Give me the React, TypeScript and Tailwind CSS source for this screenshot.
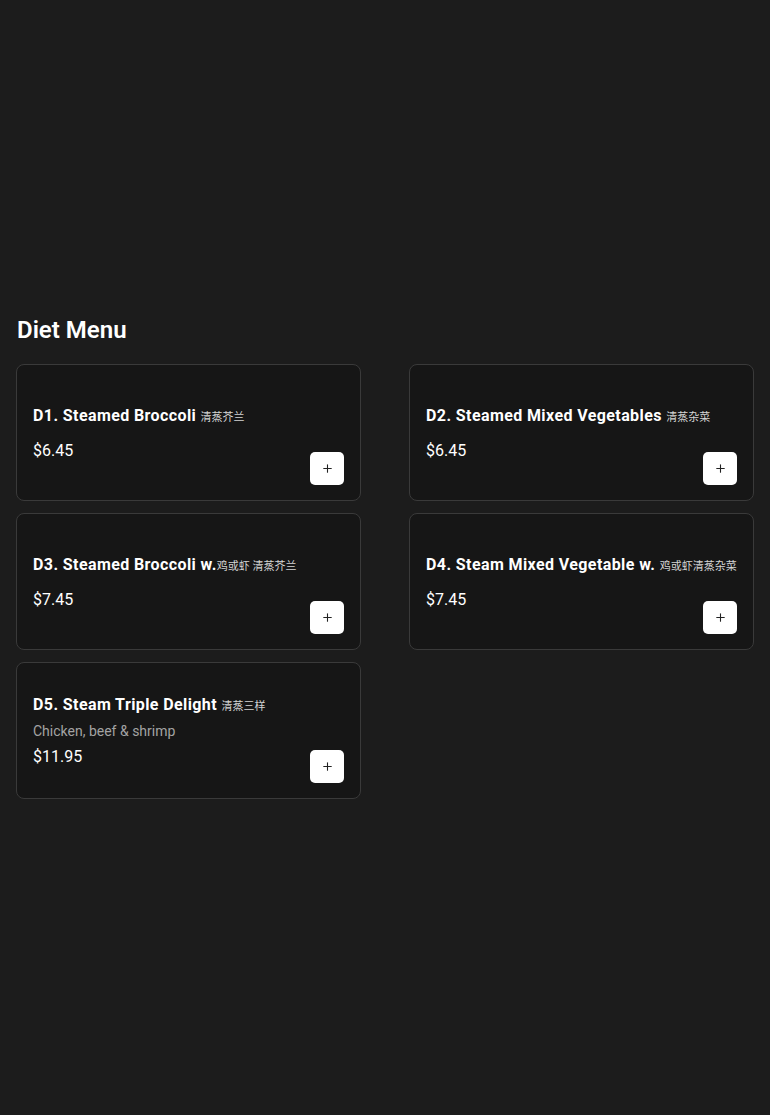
import React from 'react';
import { Plus } from 'lucide-react';

interface MenuItem {
  code: string;
  name: string;
  chinese: string;
  description?: string;
  price: string;
}

const items: MenuItem[] = [
  { code: 'D1', name: 'Steamed Broccoli', chinese: '清蒸芥兰', price: '$6.45' },
  { code: 'D2', name: 'Steamed Mixed Vegetables', chinese: '清蒸杂菜', price: '$6.45' },
  { code: 'D3', name: 'Steamed Broccoli w.', chinese: '鸡或虾 清蒸芥兰', price: '$7.45' },
  { code: 'D4', name: 'Steam Mixed Vegetable w.', chinese: '鸡或虾清蒸杂菜', price: '$7.45' },
  {
    code: 'D5',
    name: 'Steam Triple Delight',
    chinese: '清蒸三样',
    description: 'Chicken, beef & shrimp',
    price: '$11.95',
  },
];

const MenuCard: React.FC<{ item: MenuItem }> = ({ item }) => {
  // D3 has no space between "w." and the chinese name
  const sep = item.code === 'D3' ? '' : ' ';

  return (
    <div className="flex h-[137px] justify-between rounded-lg border border-[#3a3a3a] bg-[#161616] px-4 pb-[15px]">
      <div className="flex min-w-0 flex-col justify-center pt-4">
        <h3 className="whitespace-nowrap text-[16px] font-bold leading-[24px] tracking-wide text-white">
          {item.code}. {item.name}
          {sep}
          <span className="text-[11px] font-normal tracking-normal text-[#d4d4d4]">{item.chinese}</span>
        </h3>
        {item.description && (
          <p className="mt-[2px] text-[14px] leading-[20px] text-[#a3a3a3]">{item.description}</p>
        )}
        <p className={`text-[16px] leading-[24px] text-white ${item.description ? 'mt-1' : 'mt-[9px]'}`}>
          {item.price}
        </p>
      </div>
      <button
        className="flex h-[33px] w-[34px] shrink-0 items-center justify-center self-end rounded-[5px] bg-white"
        aria-label="Add"
      >
        <Plus className="h-[13px] w-[13px] text-[#222]" strokeWidth={2} />
      </button>
    </div>
  );
};

export default function App() {
  return (
    <div
      className="min-h-[1115px] bg-[#1c1c1c] px-4"
      style={{ fontFamily: 'Roboto, "Noto Sans CJK SC", sans-serif' }}
    >
      <div className="h-[314px]" />
      <h2 className="pl-[1px] text-[24px] font-semibold leading-[32px] text-white">Diet Menu</h2>
      <div className="mt-[18px] grid grid-cols-2 gap-x-12 gap-y-3">
        {items.map((item) => (
          <MenuCard key={item.code} item={item} />
        ))}
      </div>
    </div>
  );
}
